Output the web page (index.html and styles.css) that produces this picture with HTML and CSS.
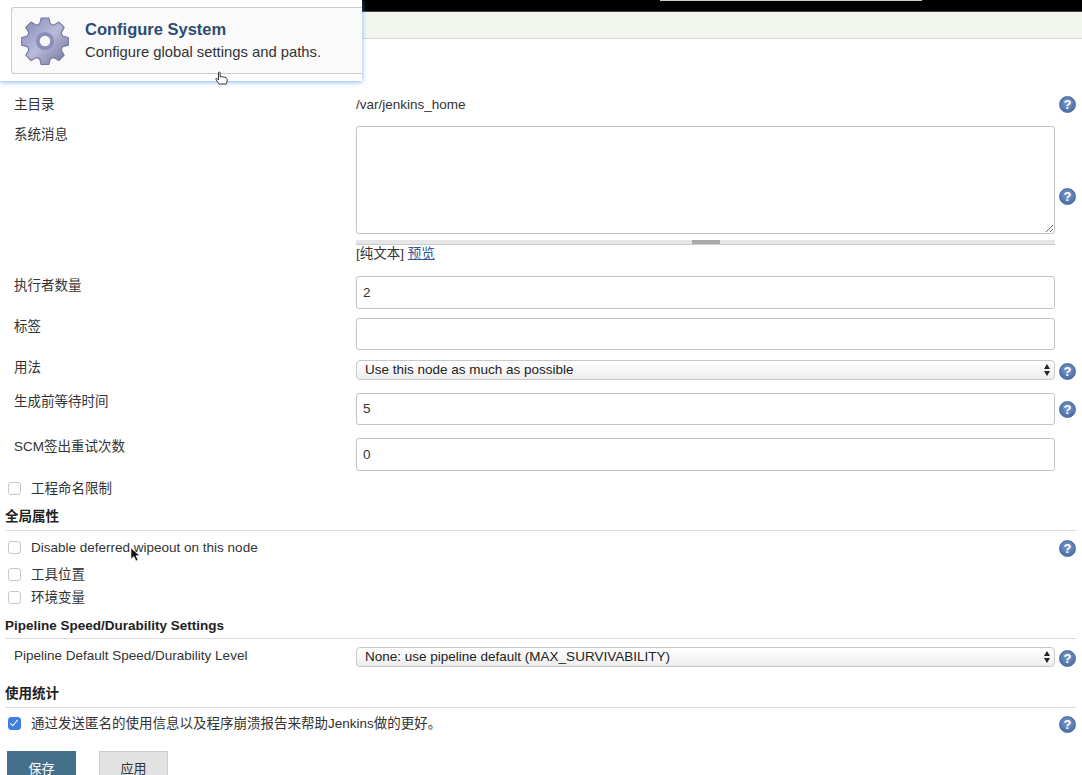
FILE: index.html
```html
<!DOCTYPE html>
<html lang="zh-CN">
<head>
    <meta charset="UTF-8">
    <meta name="viewport" content="width=device-width, initial-scale=1.0">
    <title>Configure System</title>
    <link rel="stylesheet" href="styles.css">
</head>
<body>
    <div class="topbar"><div class="search-edge"></div></div>
    <div class="breadcrumb"></div>

    <div class="popup">
        <div class="popup-card">
            <svg class="gear" viewBox="0 0 50 50" width="48" height="48">
                <defs>
                    <linearGradient id="gearFill" x1="0" y1="0" x2="1" y2="1">
                        <stop offset="0" stop-color="#7f84b4"/>
                        <stop offset="0.5" stop-color="#b9bbdb"/>
                        <stop offset="1" stop-color="#6d7099"/>
                    </linearGradient>
                </defs>
                <path fill="url(#gearFill)" stroke="#777a9c" stroke-width="1.200" stroke-linejoin="round" d="M21 1h8l1.500 6 3.500 1.500 5.500-3.200 5.500 5.500-3.200 5.500 1.500 3.500 6 1.500v8l-6 1.500-1.500 3.500 3.200 5.500-5.500 5.500-5.500-3.200-3.500 1.500-1.500 6h-8l-1.500-6-3.500-1.500-5.500 3.200-5.500-5.500 3.200-5.500-1.500-3.500-6-1.500v-8l6-1.500 1.500-3.500-3.200-5.500 5.500-5.500 5.500 3.200 3.500-1.500z"/>
                <circle cx="25" cy="25" r="9.500" fill="#8a8dba"/>
                <circle cx="25" cy="25" r="5.500" fill="#f7f7f7"/>
            </svg>
            <div>
                <div class="popup-title">Configure System</div>
                <div class="popup-desc">Configure global settings and paths.</div>
            </div>
        </div>
    </div>

    <svg class="cursor-hand" viewBox="0 0 16 14" width="16" height="14">
        <path fill="#fff" stroke="#222" stroke-width="0.9" d="M5 13 2 8.500c-.6-1 .6-1.600 1.300-.8L4.500 9V2c0-1.300 1.700-1.300 1.700 0v4l1.500-.3 1.500.2 1.500.3 1.500.6c.8.4 1 1 1 2l-.5 3-.5 1.200z"/>
    </svg>
    <svg class="cursor-arrow" viewBox="0 0 11 16" width="11" height="16">
        <path fill="#111" stroke="#fff" stroke-width="0.6" d="M1 1v11l3-2.500 2 4.500 2-1-2-4.300h3.800z"/>
    </svg>

    <form class="config-form">
        <div class="row row-home">
            <label class="row-label">主目录</label>
            <div class="row-field home-path">/var/jenkins_home</div>
            <span class="help">?</span>
        </div>

        <div class="row gap-14">
            <label class="row-label">系统消息</label>
            <div class="row-field message-field">
                <textarea class="message-box"></textarea>
                <div class="drag-bar"><span class="drag-handle"></span></div>
                <div class="preview-line">[纯文本] <a href="#">预览</a></div>
            </div>
            <span class="help">?</span>
        </div>

        <div class="row gap-10">
            <label class="row-label label-low">执行者数量</label>
            <div class="row-field"><input class="text-input" type="text" value="2"></div>
        </div>

        <div class="row gap-9">
            <label class="row-label">标签</label>
            <div class="row-field"><input class="text-input input-short" type="text"></div>
        </div>

        <div class="row gap-10">
            <label class="row-label label-flush">用法</label>
            <div class="row-field select-wrap">
                <select class="select-box">
                    <option>Use this node as much as possible</option>
                </select>
            </div>
            <span class="help help-low">?</span>
        </div>

        <div class="row gap-13">
            <label class="row-label">生成前等待时间</label>
            <div class="row-field"><input class="text-input input-short" type="text" value="5"></div>
            <span class="help">?</span>
        </div>

        <div class="row gap-13">
            <label class="row-label">SCM签出重试次数</label>
            <div class="row-field"><input class="text-input" type="text" value="0"></div>
        </div>

        <div class="check-row gap-9">
            <input class="check" type="checkbox">
            <label>工程命名限制</label>
        </div>

        <div class="section-title gap-12">全局属性</div>

        <div class="check-row gap-8">
            <input class="check" type="checkbox">
            <label>Disable deferred wipeout on this node</label>
            <span class="help help-right">?</span>
        </div>
        <div class="check-row gap-11">
            <input class="check" type="checkbox">
            <label>工具位置</label>
        </div>
        <div class="check-row gap-7">
            <input class="check" type="checkbox">
            <label>环境变量</label>
        </div>

        <div class="section-title gap-12 title-tight">Pipeline Speed/Durability Settings</div>

        <div class="row gap-8">
            <label class="row-label">Pipeline Default Speed/Durability Level</label>
            <div class="row-field select-wrap">
                <select class="select-box">
                    <option>None: use pipeline default (MAX_SURVIVABILITY)</option>
                </select>
            </div>
            <span class="help help-low">?</span>
        </div>

        <div class="section-title gap-18">使用统计</div>

        <div class="check-row gap-7">
            <input class="check" type="checkbox" checked>
            <label>通过发送匿名的使用信息以及程序崩溃报告来帮助Jenkins做的更好。</label>
            <span class="help help-right">?</span>
        </div>

        <div class="buttons">
            <button class="btn btn-save" type="button">保存</button>
            <button class="btn btn-apply" type="button">应用</button>
        </div>
    </form>
</body>
</html>
```

FILE: styles.css
```css
html, body {
    margin: 0;
    height: 775px;
    overflow: hidden;
}

body {
    position: relative;
    background: #fff;
    color: #333;
    font-family: "Liberation Sans", "Noto Sans CJK SC", sans-serif;
    font-size: 13.5px;
    line-height: 16px;
}

.topbar {
    height: 11px;
    background: #000;
    border-bottom: 1px solid #444;
}

.search-edge {
    width: 262px;
    height: 1px;
    margin-left: 660px;
    background: #ccc;
}

.breadcrumb {
    height: 26px;
    background: #f3f6ef;
    border-bottom: 1px solid #d8d8d8;
}

/* popup over the top left corner */
.popup {
    position: absolute;
    left: 0;
    top: 0;
    width: 362px;
    height: 81px;
    background: #fff;
    box-shadow: 0 1px 5px rgba(70, 150, 240, 0.7);
    box-sizing: border-box;
    padding: 7px 0 0 11px;
}

.popup-card {
    display: flex;
    align-items: center;
    height: 67px;
    box-sizing: border-box;
    background: #fafafa;
    border: 1px solid #ccc;
    border-right: none;
    border-radius: 3px 0 0 3px;
}

.gear {
    margin: 0 16px 0 9px;
}

.popup-title {
    color: #2c4d70;
    font-size: 16.5px;
    font-weight: bold;
    line-height: 20px;
    margin-bottom: 3px;
}

.popup-desc {
    font-size: 14.8px;
    line-height: 20px;
}

.cursor-hand {
    position: absolute;
    left: 214px;
    top: 71px;
}

.cursor-arrow {
    position: absolute;
    left: 130px;
    top: 547px;
}

.config-form {
    padding: 57px 6px 0 5px;
}

.row {
    display: grid;
    grid-template-columns: 351px 699px 1fr;
}

.row-home {
    height: 16px;
}

.home-path {
    padding-top: 1px;
}

.row-label {
    padding-left: 9px;
    padding-top: 1px;
}

.label-low {
    padding-top: 2px;
}

.label-flush {
    padding-top: 0;
}

.row-field {
    min-width: 0;
}

.message-field {
    height: 140px;
}

.message-box {
    display: block;
    width: 100%;
    height: 108px;
    box-sizing: border-box;
    border: 1px solid #c4c4c4;
    border-radius: 3px;
    margin: 0;
}

.drag-bar {
    display: flex;
    justify-content: center;
    height: 5px;
    margin-top: 6px;
    background: #e6e6e6;
    border-bottom: 1px solid #ccc;
    box-sizing: border-box;
}

.drag-handle {
    width: 28px;
    background: #aaa;
}

.preview-line {
    height: 21px;
    line-height: 17px;
}

.preview-line a {
    color: #2a5a9c;
}

.text-input {
    display: block;
    width: 100%;
    height: 33px;
    box-sizing: border-box;
    border: 1px solid #c4c4c4;
    border-radius: 3px;
    padding: 0 6px;
    color: #333;
    font: 13.5px "Liberation Sans", sans-serif;
    outline: none;
}

.input-short {
    height: 32px;
    padding-bottom: 2px;
}

.select-wrap {
    position: relative;
}

.select-box {
    display: block;
    width: 100%;
    height: 20px;
    box-sizing: border-box;
    appearance: none;
    border: 1px solid #c8c8c8;
    border-radius: 4px;
    background: linear-gradient(#fff, #eee);
    padding: 0 0 2px 8px;
    color: #222;
    font: 13.5px "Liberation Sans", sans-serif;
}

.select-wrap::before,
.select-wrap::after {
    content: "";
    position: absolute;
    right: 5px;
    border-left: 3.5px solid transparent;
    border-right: 3.5px solid transparent;
}

.select-wrap::before {
    top: 4px;
    border-bottom: 5px solid #222;
}

.select-wrap::after {
    top: 11px;
    border-top: 5px solid #222;
}

.help {
    justify-self: end;
    align-self: center;
    width: 17px;
    height: 17px;
    border-radius: 50%;
    box-sizing: border-box;
    border: 1px solid #4b6ea5;
    background: radial-gradient(circle at 50% 40%, #7e9ccb, #3d5f99);
    color: #fff;
    font-size: 13px;
    font-weight: bold;
    line-height: 15px;
    text-align: center;
}

.help-low {
    position: relative;
    top: 1px;
}

.check-row {
    position: relative;
    display: flex;
    align-items: center;
    height: 16px;
    padding-left: 3px;
}

.check-row label {
    padding-top: 2px;
}

.check {
    appearance: none;
    flex: none;
    width: 13px;
    height: 13px;
    margin: 0 10px 0 0;
    border: 1px solid #c8c8c8;
    border-radius: 3px;
    background: #fff;
    box-sizing: border-box;
}

.check:checked {
    position: relative;
    background: #3f7fe0;
    border-color: #3f7fe0;
}

.check:checked::after {
    content: "";
    position: absolute;
    left: 3px;
    top: 0;
    width: 3px;
    height: 7px;
    border: solid #fff;
    border-width: 0 1.5px 1.5px 0;
    transform: rotate(40deg);
}

.help-right {
    position: absolute;
    right: 0;
    top: 1px;
}

.section-title {
    color: #222;
    font-size: 13.5px;
    font-weight: bold;
    padding-top: 1px;
    padding-bottom: 5px;
    border-bottom: 1px solid #ddd;
}

.title-tight {
    padding-bottom: 4px;
}

.gap-7 { margin-top: 7px; }
.gap-8 { margin-top: 8px; }
.gap-9 { margin-top: 9px; }
.gap-10 { margin-top: 10px; }
.gap-11 { margin-top: 11px; }
.gap-12 { margin-top: 12px; }
.gap-13 { margin-top: 13px; }
.gap-14 { margin-top: 14px; }
.gap-18 { margin-top: 18px; }

.buttons {
    display: flex;
    gap: 23px;
    margin: 20px 0 0 2px;
}

.btn {
    width: 69px;
    height: 24px;
    box-sizing: border-box;
    border: 1px solid #ccc;
    border-bottom: none;
    border-radius: 1px 1px 0 0;
    padding: 8px 0 0;
    font-family: "Noto Sans CJK SC", sans-serif;
    font-size: 13px;
    line-height: 14px;
}

.btn-save {
    background: #44708c;
    border-color: #44708c;
    color: #fff;
}

.btn-apply {
    background: #e2e2e2;
    color: #333;
}
```
